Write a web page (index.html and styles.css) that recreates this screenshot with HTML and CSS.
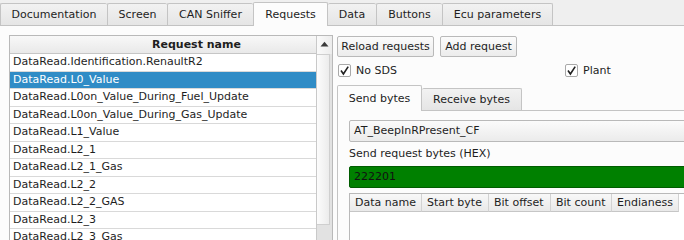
FILE: index.html
```html
<!DOCTYPE html>
<html>
<head>
<meta charset="utf-8">
<link rel="stylesheet" href="styles.css">
</head>
<body>
<div class="window">
  <div class="tabbar">
    <div class="tab w-doc">Documentation</div>
    <div class="tab w-screen">Screen</div>
    <div class="tab w-can">CAN Sniffer</div>
    <div class="tab sel w-req">Requests</div>
    <div class="tab w-data">Data</div>
    <div class="tab w-btn">Buttons</div>
    <div class="tab last w-ecu">Ecu parameters</div>
  </div>
  <div class="pane">
    <div class="list">
      <div class="listview">
        <div class="header"><span>Request name</span></div>
        <div class="row">DataRead.Identification.RenaultR2</div>
        <div class="row selected">DataRead.L0_Value</div>
        <div class="row">DataRead.L0on_Value_During_Fuel_Update</div>
        <div class="row">DataRead.L0on_Value_During_Gas_Update</div>
        <div class="row">DataRead.L1_Value</div>
        <div class="row">DataRead.L2_1</div>
        <div class="row">DataRead.L2_1_Gas</div>
        <div class="row">DataRead.L2_2</div>
        <div class="row">DataRead.L2_2_GAS</div>
        <div class="row">DataRead.L2_3</div>
        <div class="row">DataRead.L2_3_Gas</div>
        <div class="row">DataRead.L2_4</div>
      </div>
      <div class="scrollbar">
        <div class="arrow"><svg width="9" height="6" viewBox="0 0 9 6"><path d="M0.5 5.5 L4.5 0.8 L8.5 5.5 Z" fill="#3a3a3a"/></svg></div>
        <div class="thumb"></div>
      </div>
    </div>
    <div class="right">
      <div class="buttons">
        <div class="button w-reload">Reload requests</div>
        <div class="button w-add">Add request</div>
      </div>
      <div class="checks">
        <div class="check col1"><span class="box"><svg width="11" height="11" viewBox="0 0 11 11"><path d="M2 5.5 L4.4 9 L9.2 1.6" fill="none" stroke="#222" stroke-width="1.6"/></svg></span>No SDS</div>
        <div class="check"><span class="box"><svg width="11" height="11" viewBox="0 0 11 11"><path d="M2 5.5 L4.4 9 L9.2 1.6" fill="none" stroke="#222" stroke-width="1.6"/></svg></span>Plant</div>
      </div>
      <div class="itabbar">
        <div class="itab isel w-send">Send bytes</div>
        <div class="itab w-recv">Receive bytes</div>
      </div>
      <div class="ipane">
        <div class="combo">AT_BeepInRPresent_CF</div>
        <div class="label">Send request bytes (HEX)</div>
        <div class="hexedit">222201</div>
        <div class="table">
          <div class="thead">
            <div class="th c1">Data name</div>
            <div class="th c2">Start byte</div>
            <div class="th c3">Bit offset</div>
            <div class="th c4">Bit count</div>
            <div class="th c5">Endianess</div>
          </div>
        </div>
      </div>
    </div>
  </div>
</div>
</body>
</html>
```

FILE: styles.css
```css
html, body {
  margin: 0;
  padding: 0;
  width: 684px;
  height: 240px;
  overflow: hidden;
  background: #efefef;
  font-family: "DejaVu Sans", sans-serif;
  font-size: 11px;
  color: #1e1e1e;
}

.window {
  width: 684px;
  height: 240px;
  display: flex;
  flex-direction: column;
}

.tabbar {
  display: flex;
  align-items: flex-end;
  height: 25px;
  border-bottom: 1px solid #c2c2c2;
  flex: none;
}

.tab {
  box-sizing: border-box;
  height: 22px;
  border: 1px solid #c4c4c4;
  border-right: none;
  border-bottom: none;
  border-radius: 2px 2px 0 0;
  background: linear-gradient(#f2f2f2, #e5e5e5);
  text-align: center;
  line-height: 21px;
  white-space: nowrap;
}
.tab.last { border-right: 1px solid #c4c4c4; }
.tab.sel {
  height: 24px;
  margin-bottom: -1px;
  background: #fcfcfc;
  border-right: 1px solid #c4c4c4;
  line-height: 23px;
  position: relative;
  z-index: 1;
}
.tab.sel + .tab { border-left: none; }

.w-doc { width: 107px; }
.w-screen { width: 60px; }
.w-can { width: 86px; }
.w-req { width: 75px; }
.w-data { width: 48px; }
.w-btn { width: 66px; }
.w-ecu { width: 111px; }

.pane {
  flex: 1;
  background: #fcfcfc;
  display: flex;
  padding: 9px 0 0 9px;
  gap: 4px;
  overflow: hidden;
}

.list {
  flex: none;
  width: 324px;
  height: 230px;
  box-sizing: border-box;
  border: 1px solid #b9b9b9;
  display: flex;
  background: #fff;
}

.listview {
  width: 307px;
  overflow: hidden;
}

.header {
  box-sizing: border-box;
  height: 18px;
  background: linear-gradient(#f8f8f8, #e9e9e9);
  border-bottom: 1px solid #c6c6c6;
  font-weight: bold;
  line-height: 17px;
  padding-left: 142px;
  white-space: nowrap;
}

.row {
  box-sizing: border-box;
  height: 17.5px;
  border-bottom: 1px solid #d9d9d9;
  padding-left: 3px;
  line-height: 16px;
  white-space: nowrap;
}
.row.selected {
  background: #308cc6;
  color: #fff;
}

.scrollbar {
  width: 16px;
  box-sizing: border-box;
  border-left: 1px solid #c9c9c9;
  background: #e2e2e2;
  display: flex;
  flex-direction: column;
}
.arrow {
  height: 18px;
  background: linear-gradient(90deg, #fafafa, #ececec);
  display: flex;
  justify-content: center;
  padding-top: 5px;
  box-sizing: border-box;
}
.thumb {
  height: 171px;
  box-sizing: border-box;
  margin: 0 2px 0 0;
  background: linear-gradient(90deg, #fcfcfc, #ececec);
  border: 1px solid #cfcfcf;
  border-left: none;
}

.right {
  flex: none;
  width: 460px;
  display: flex;
  flex-direction: column;
  padding-top: 1px;
}

.buttons {
  display: flex;
  gap: 6px;
}
.button {
  box-sizing: border-box;
  height: 21px;
  border: 1px solid #b9b9b9;
  border-radius: 2px;
  background: linear-gradient(#fbfbfb, #ececec);
  text-align: center;
  line-height: 19px;
  white-space: nowrap;
}
.w-reload { width: 97px; }
.w-add { width: 77px; }

.checks {
  display: flex;
  margin-top: 7px;
  height: 15px;
  align-items: center;
}
.check {
  display: flex;
  align-items: center;
  gap: 5px;
  white-space: nowrap;
}
.check.col1 { width: 227px; padding-left: 1px; }
.box {
  box-sizing: border-box;
  width: 13px;
  height: 13px;
  border: 1px solid #a9a9a9;
  border-radius: 2px;
  background: #fff;
  display: flex;
  align-items: center;
  justify-content: center;
}

.itabbar {
  display: flex;
  align-items: flex-end;
  margin-top: 8px;
  height: 25px;
}
.itab {
  box-sizing: border-box;
  height: 22px;
  border: 1px solid #c4c4c4;
  border-bottom: none;
  border-left: none;
  border-radius: 2px 2px 0 0;
  background: linear-gradient(#f2f2f2, #e5e5e5);
  text-align: center;
  line-height: 21px;
  white-space: nowrap;
}
.itab.isel {
  height: 26px;
  margin-bottom: -1px;
  background: #fcfcfc;
  border-left: 1px solid #c4c4c4;
  line-height: 25px;
  position: relative;
  z-index: 1;
}
.w-send { width: 85px; }
.w-recv { width: 100px; }

.ipane {
  flex: 1;
  border-top: 1px solid #c4c4c4;
  border-left: 1px solid #c4c4c4;
  padding: 9px 0 0 11px;
  background: #fcfcfc;
}

.combo {
  box-sizing: border-box;
  height: 22px;
  width: 400px;
  border: 1px solid #b9b9b9;
  border-radius: 2px;
  background: linear-gradient(#fbfbfb, #ebebeb);
  padding-left: 4px;
  line-height: 20px;
}

.label {
  margin-top: 3px;
  height: 18px;
  line-height: 18px;
}

.hexedit {
  box-sizing: border-box;
  margin-top: 3px;
  height: 22px;
  width: 400px;
  border: 1px solid #005c00;
  border-radius: 2px;
  background: #008000;
  color: #111;
  padding-left: 4px;
  line-height: 20px;
}

.table {
  margin-top: 5px;
  width: 400px;
  height: 60px;
  box-sizing: border-box;
  border: 1px solid #b9b9b9;
  background: #fff;
}
.thead {
  display: flex;
  height: 18px;
}
.th {
  box-sizing: border-box;
  height: 18px;
  background: linear-gradient(#f8f8f8, #e9e9e9);
  border-right: 1px solid #d2d2d2;
  border-bottom: 1px solid #c6c6c6;
  padding-left: 5px;
  line-height: 17px;
  white-space: nowrap;
}
.c1 { width: 72px; }
.c2 { width: 67px; }
.c3 { width: 62px; }
.c4 { width: 61px; }
.c5 { width: 67px; }
```
